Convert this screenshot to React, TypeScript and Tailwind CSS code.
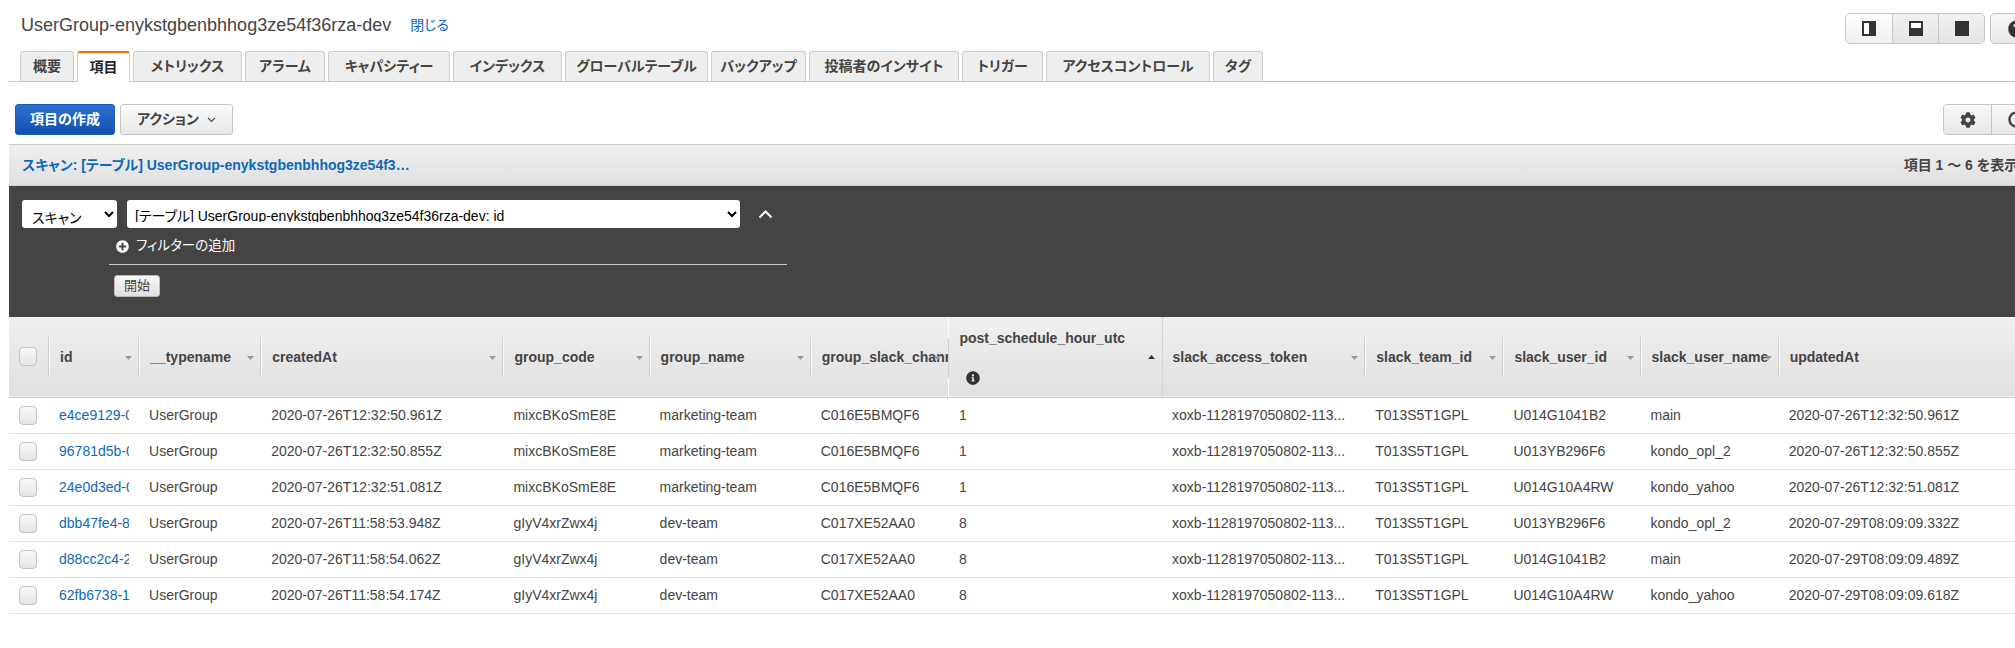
import { FaCog, FaInfoCircle, FaPlusCircle, FaQuestionCircle, FaRedo } from "react-icons/fa";

const TABS = [
  { label: "概要", width: "w-[54px]" },
  { label: "項目", width: "w-[53px]", active: true },
  { label: "メトリックス", width: "w-[109px]" },
  { label: "アラーム", width: "w-[80px]" },
  { label: "キャパシティー", width: "w-[122px]" },
  { label: "インデックス", width: "w-[109px]" },
  { label: "グローバルテーブル", width: "w-[143px]" },
  { label: "バックアップ", width: "w-[95px]" },
  { label: "投稿者のインサイト", width: "w-[150px]" },
  { label: "トリガー", width: "w-[81px]" },
  { label: "アクセスコントロール", width: "w-[164px]" },
  { label: "タグ", width: "w-[50px]" },
];

const COLUMNS = [
  { label: "id", width: "w-[90px]" },
  { label: "__typename", width: "w-[122px]" },
  { label: "createdAt", width: "w-[242px]" },
  { label: "group_code", width: "w-[146px]" },
  { label: "group_name", width: "w-[161px]" },
  { label: "group_slack_channel", width: "w-[138px]" },
  { label: "post_schedule_hour_utc", width: "w-[213px]", sorted: true },
  { label: "slack_access_token", width: "w-[203px]", plain: true },
  { label: "slack_team_id", width: "w-[138px]" },
  { label: "slack_user_id", width: "w-[137px]" },
  { label: "slack_user_name", width: "w-[138px]" },
  { label: "updatedAt", width: "w-[250px]" },
];

const TOKEN = "xoxb-1128197050802-113...";

const ROWS = [
  ["e4ce9129-0c3a", "UserGroup", "2020-07-26T12:32:50.961Z", "mixcBKoSmE8E", "marketing-team", "C016E5BMQF6", "1", TOKEN, "T013S5T1GPL", "U014G1041B2", "main", "2020-07-26T12:32:50.961Z"],
  ["96781d5b-0f21", "UserGroup", "2020-07-26T12:32:50.855Z", "mixcBKoSmE8E", "marketing-team", "C016E5BMQF6", "1", TOKEN, "T013S5T1GPL", "U013YB296F6", "kondo_opl_2", "2020-07-26T12:32:50.855Z"],
  ["24e0d3ed-0a77", "UserGroup", "2020-07-26T12:32:51.081Z", "mixcBKoSmE8E", "marketing-team", "C016E5BMQF6", "1", TOKEN, "T013S5T1GPL", "U014G10A4RW", "kondo_yahoo", "2020-07-26T12:32:51.081Z"],
  ["dbb47fe4-8c12", "UserGroup", "2020-07-26T11:58:53.948Z", "gIyV4xrZwx4j", "dev-team", "C017XE52AA0", "8", TOKEN, "T013S5T1GPL", "U013YB296F6", "kondo_opl_2", "2020-07-29T08:09:09.332Z"],
  ["d88cc2c4-2e90", "UserGroup", "2020-07-26T11:58:54.062Z", "gIyV4xrZwx4j", "dev-team", "C017XE52AA0", "8", TOKEN, "T013S5T1GPL", "U014G1041B2", "main", "2020-07-29T08:09:09.489Z"],
  ["62fb6738-1d45", "UserGroup", "2020-07-26T11:58:54.174Z", "gIyV4xrZwx4j", "dev-team", "C017XE52AA0", "8", TOKEN, "T013S5T1GPL", "U014G10A4RW", "kondo_yahoo", "2020-07-29T08:09:09.618Z"],
];

function Checkbox() {
  return (
    <span className="block h-[19px] w-[18px] rounded-[4px] border border-[#c4c4c4] bg-gradient-to-b from-[#f8f8f8] to-[#e6e6e6]" />
  );
}

function PanelIcon({ mode }: { mode: "left" | "bottom" | "full" }) {
  return (
    <svg width="14" height="15" viewBox="0 0 14 15">
      <rect width="14" height="15" fill="#333" />
      {mode === "left" && <rect x="2" y="2" width="5" height="11" fill="#fff" />}
      {mode === "bottom" && <rect x="2" y="2" width="10" height="5" fill="#fff" />}
    </svg>
  );
}

export default function App() {
  return (
    <div className="h-[648px] w-[2015px] overflow-hidden bg-white font-['Liberation_Sans','Noto_Sans_CJK_JP',sans-serif] text-[14px] text-[#444] [font-feature-settings:'palt']">
      <div className="ml-[9px] w-[2120px]">
        <div className="flex h-[51px] items-start">
          <h1 className="ml-3 mt-[13px] text-[18px] leading-[24px] font-normal">UserGroup-enykstgbenbhhog3ze54f36rza-dev</h1>
          <a className="ml-[19px] mt-[15px] text-[14px] leading-[20px] text-[#1166bb]">閉じる</a>
          <div className="ml-[1396px] mt-[13px] flex">
            <div className="flex h-[31px] overflow-hidden rounded-[5px] border border-[#c4c4c4]">
              <span className="flex w-[46px] items-center justify-center bg-gradient-to-b from-[#fdfdfd] to-[#f0f0f0]">
                <PanelIcon mode="left" />
              </span>
              <span className="flex w-[46px] items-center justify-center border-l border-[#c8c8c8] bg-gradient-to-b from-[#f2f2f2] to-[#e4e4e4]">
                <PanelIcon mode="bottom" />
              </span>
              <span className="flex w-[46px] items-center justify-center border-l border-[#c8c8c8] bg-gradient-to-b from-[#f2f2f2] to-[#e4e4e4]">
                <PanelIcon mode="full" />
              </span>
            </div>
            <div className="ml-[5px] flex h-[31px] w-[54px] items-center justify-center rounded-[5px] border border-[#c4c4c4] bg-gradient-to-b from-[#f8f8f8] to-[#e8e8e8]">
              <FaQuestionCircle className="text-[18px] text-[#333]" />
            </div>
          </div>
        </div>

        <div className="flex h-[31px] gap-[3px] border-b border-[#c4c4c4] pl-[11px]">
          {TABS.map((tab) => (
            <div
              key={tab.label}
              className={
                tab.active
                  ? `${tab.width} z-10 flex h-[31px] items-center justify-center rounded-t-[3px] border-t-2 border-x border-[#e8710a] border-x-[#ccc] bg-white text-[14px] font-bold text-[#222]`
                  : `${tab.width} flex h-[30px] items-center justify-center rounded-t-[3px] border border-b-0 border-[#ccc] bg-[#eee] text-[14px] font-bold text-[#444]`
              }
            >
              {tab.label}
            </div>
          ))}
        </div>

        <div className="mt-[22px] flex h-[31px] items-start pl-[6px]">
          <button className="h-[31px] w-[100px] rounded-[3px] border border-[#1a5cb8] bg-gradient-to-b from-[#2a71d2] to-[#1350ae] text-[14px] font-bold text-white">
            項目の作成
          </button>
          <button className="ml-[5px] flex h-[31px] w-[113px] items-center justify-center gap-[8px] rounded-[3px] border border-[#c6c6c6] bg-gradient-to-b from-[#fbfbfb] to-[#e8e8e8] text-[14px] font-bold text-[#444]">
            アクション
            <svg width="9" height="6" viewBox="0 0 9 6" fill="none" stroke="#444" strokeWidth="1.1">
              <path d="M1 1l3.5 3.5L8 1" />
            </svg>
          </button>
          <div className="ml-[1710px] flex h-[31px] overflow-hidden rounded-[4px] border border-[#c6c6c6]">
            <span className="flex w-[47px] items-center justify-center bg-gradient-to-b from-[#f8f8f8] to-[#e8e8e8]">
              <FaCog className="text-[16px] text-[#444]" />
            </span>
            <span className="flex w-[50px] items-center justify-center border-l border-[#c6c6c6] bg-gradient-to-b from-[#f8f8f8] to-[#e8e8e8]">
              <FaRedo className="text-[17px] text-[#444]" />
            </span>
          </div>
        </div>

        <div className="mt-[9px] flex h-[42px] items-center border-y border-[#cfcfcf] bg-gradient-to-b from-[#f0f0f0] to-[#e0e0e0] pl-[13px]">
          <span className="text-[14px] font-bold text-[#0f68b8]">スキャン: [テーブル] UserGroup-enykstgbenbhhog3ze54f3…</span>
          <span className="ml-[1494px] whitespace-nowrap text-[14px] font-bold text-[#444]">項目 1 〜 6 を表示中</span>
        </div>

        <div className="h-[131px] bg-[#444] pl-[13px] pt-[14px]">
          <div className="flex items-center">
            <select className="h-[28px] w-[95px] rounded-[3px] bg-white pl-[6px] pt-[7px] text-[14px] text-black">
              <option>スキャン</option>
            </select>
            <select className="ml-[10px] h-[28px] w-[613px] rounded-[3px] bg-white pb-[6px] pl-[4px] pt-[7px] text-[14px] text-black">
              <option>[テーブル] UserGroup-enykstgbenbhhog3ze54f36rza-dev: id</option>
            </select>
            <svg className="ml-[18px]" width="15" height="9" viewBox="0 0 15 9" fill="none" stroke="#fff" strokeWidth="2">
              <path d="M1.5 7.5l6-6 6 6" />
            </svg>
          </div>
          <div className="ml-[87px] w-[678px]">
            <div className="flex h-[37px] items-center gap-[7px] border-b border-[#c8c8c8] pl-[7px] text-[13.5px] text-white">
              <FaPlusCircle className="text-[13px]" />
              フィルターの追加
            </div>
            <button className="ml-[5px] mt-[10px] h-[22px] w-[46px] rounded-[3px] border border-[#bbb] bg-gradient-to-b from-[#f8f8f8] to-[#e0e0e0] text-[13px] text-[#444]">
              開始
            </button>
          </div>
        </div>

        <table className="w-[2020px] table-fixed border-collapse">
          <colgroup>
            <col className="w-[40px]" />
            {COLUMNS.map((col) => (
              <col key={col.label} className={col.width} />
            ))}
          </colgroup>
          <thead>
            <tr className="h-[80px] border-b border-[#c8c8c8] bg-gradient-to-b from-[#f0f0f0] to-[#e0e0e0]">
              <th className="pl-[10px] align-middle">
                <Checkbox />
              </th>
              {COLUMNS.map((col) =>
                col.sorted ? (
                  <th key={col.label} className="relative h-[80px] border-l border-r border-l-white border-r-[#d4d4d4] pl-[10px] text-left align-top text-[14px] font-bold">
                    <span className="absolute -left-px top-[21px] h-[40px] w-px bg-[#d0d0d0]" />
                    <div className="mt-[12px] leading-[18px]">{col.label}</div>
                    <FaInfoCircle className="ml-[7px] mt-[24px] text-[14px] text-[#333]" />
                    <svg className="absolute right-[7px] top-[38px]" width="7" height="4" viewBox="0 0 7 4">
                      <path d="M3.5 0L7 4H0z" fill="#333" />
                    </svg>
                  </th>
                ) : (
                  <th key={col.label} className="relative p-0 text-left text-[14px] font-bold">
                    <div
                      className={
                        col.plain
                          ? "mt-px flex h-[40px] items-center overflow-hidden whitespace-nowrap pl-[10px]"
                          : "mt-px flex h-[40px] items-center overflow-hidden whitespace-nowrap border-l border-[#f8f8f8] pl-[10px] shadow-[-1px_0_0_#d0d0d0]"
                      }
                    >
                      {col.label}
                    </div>
                    <svg className="absolute right-[7px] top-[39px]" width="7" height="4" viewBox="0 0 7 4">
                      <path d="M0 0h7L3.5 4z" fill="#999" />
                    </svg>
                  </th>
                ),
              )}
            </tr>
          </thead>
          <tbody>
            {ROWS.map((row) => (
              <tr key={row[0]} className="h-[36px] border-b border-[#e2e2e2]">
                <td className="pl-[10px]">
                  <Checkbox />
                </td>
                {row.map((cell, i) => (
                  <td key={i} className="p-0 pl-[10px] pr-[10px]">
                    <div className={i === 0 ? "overflow-hidden whitespace-nowrap text-[#0f68b8]" : "overflow-hidden whitespace-nowrap"}>{cell}</div>
                  </td>
                ))}
              </tr>
            ))}
          </tbody>
        </table>
      </div>
    </div>
  );
}
